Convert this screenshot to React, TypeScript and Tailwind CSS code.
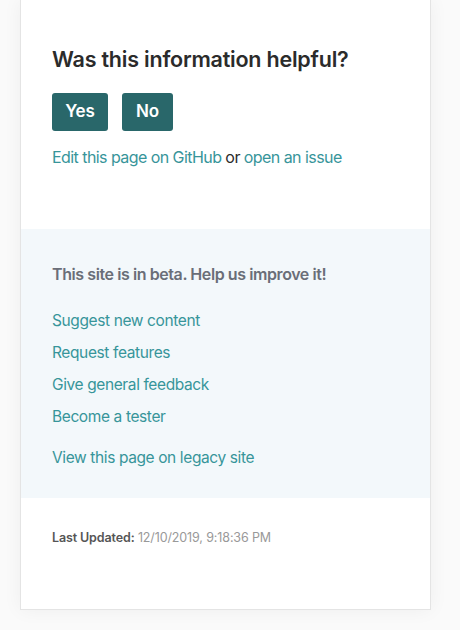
export default function App() {
  const links = [
    "Suggest new content",
    "Request features",
    "Give general feedback",
    "Become a tester",
  ];

  return (
    <div
      className="min-h-[630px] w-[460px] bg-[#fafafa] pl-5 pr-[29px]"
      style={{ fontFamily: "Inter, 'Noto Sans', sans-serif" }}
    >
      <div className="flex h-[610px] flex-col border border-t-0 border-[#e4e4e4] bg-white shadow-[0_0_18px_rgba(0,0,0,0.05)]">
        {/* Feedback */}
        <div className="px-[31px] pt-[44px] pb-[59px]">
          <h2 className="text-[21.5px] font-semibold leading-[30px] tracking-[-0.01em] text-[#2b2b2b]">
            Was this information helpful?
          </h2>
          <div className="mt-[19px] flex gap-[14px]">
            <button className="h-[38px] w-[56px] rounded-[3px] bg-[#29676a] text-[17px] font-semibold tracking-[-0.01em] text-white">
              Yes
            </button>
            <button className="h-[38px] w-[51px] rounded-[3px] bg-[#29676a] text-[17px] font-semibold tracking-[-0.01em] text-white">
              No
            </button>
          </div>
          <p className="mt-[13px] text-[16px] leading-[26px] tracking-[-0.035em] text-[#2b2b2b]">
            <a className="text-[#37959a]">Edit this page on GitHub</a> or{" "}
            <a className="text-[#37959a]">open an issue</a>
          </p>
        </div>

        {/* Beta */}
        <div className="bg-[#f3f8fb] px-[31px] pt-[33px] pb-[28px]">
          <p className="text-[16px] font-semibold leading-[24px] tracking-[-0.026em] text-[#6a6e78]">
            This site is in beta. Help us improve it!
          </p>
          <ul className="mt-[23px] flex flex-col gap-[8px]">
            {links.map((l) => (
              <li key={l} className="leading-[24px]">
                <a className="block text-[15.5px] leading-[24px] tracking-[-0.025em] text-[#37959a]">
                  {l}
                </a>
              </li>
            ))}
          </ul>
          <a className="mt-[17px] block text-[15.5px] leading-[24px] tracking-[-0.025em] text-[#37959a]">
            View this page on legacy site
          </a>
        </div>

        {/* Updated */}
        <div className="px-[31px] pt-[30px]">
          <p className="text-[12.5px] leading-[20px] tracking-[-0.01em] text-[#999]">
            <span className="font-semibold text-[#555]">Last Updated:</span>{" "}
            12/10/2019, 9:18:36 PM
          </p>
        </div>
      </div>
    </div>
  );
}
